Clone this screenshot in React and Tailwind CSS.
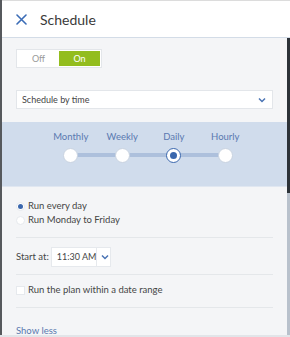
import React, { useState } from "react";

const Chevron = ({ className }) => (
  <svg width="8" height="6" viewBox="0 0 8 6" className={className}>
    <polyline points="1,1.5 4,4.5 7,1.5" fill="none" stroke="#4a74b4" strokeWidth="1.5" />
  </svg>
);

export default function App() {
  const [enabled, setEnabled] = useState(true);
  const [freq, setFreq] = useState("Daily");
  const [runMode, setRunMode] = useState("every");
  const steps = ["Monthly", "Weekly", "Daily", "Hourly"];

  return (
    <div
      className="relative flex w-[290px] h-[337px] overflow-hidden bg-white text-[#404040]"
      style={{ fontFamily: "Lato, 'Open Sans', sans-serif" }}
    >
      {/* window edge */}
      <div className="w-[2px] shrink-0 bg-[#56595d]" />

      <div className="flex flex-1 flex-col">
        {/* header */}
        <div className="flex h-[38px] shrink-0 items-center border-t border-b border-t-[#dcdcdc] border-b-[#d3dce7] bg-white pl-[14px]">
          <svg width="11" height="11" viewBox="0 0 11 11">
            <path d="M1 1 L10 10 M10 1 L1 10" stroke="#3b6cb6" strokeWidth="1.6" strokeLinecap="round" />
          </svg>
          <span className="ml-[13px] text-[14px] text-[#3a3a3a]">Schedule</span>
        </div>

        <div className="flex flex-1">
          {/* body */}
          <div className="flex flex-1 flex-col bg-[#f4f5f7]">
            <div className="px-[14px] pt-[11px]">
              <div className="flex h-[19px] w-[86px] border border-[#e3e6ea] bg-white p-[1px] text-[9px]">
                <button
                  onClick={() => setEnabled(false)}
                  className={`flex-1 ${!enabled ? "bg-[#93bd1e] text-white" : "text-[#9a9a9a]"}`}
                >
                  Off
                </button>
                <button
                  onClick={() => setEnabled(true)}
                  className={`flex-1 ${enabled ? "bg-[#93bd1e] text-white" : "text-[#9a9a9a]"}`}
                >
                  On
                </button>
              </div>

              <div className="mt-[22px] flex h-[19px] items-center justify-between border border-[#e3e6ea] bg-white pl-[5px] pr-[6px] text-[9px] text-[#454545]">
                <span>Schedule by time</span>
                <Chevron />
              </div>
            </div>

            {/* frequency slider */}
            <div className="mt-[13px] h-[65px] border-b border-[#e0e7f1] bg-[#d0dcec] pt-[9px]">
              <div className="relative ml-[43px] flex w-[206px]">
                <div className="absolute left-[25px] right-[25px] top-[22px] h-[4px] bg-[#adc0dc]" />
                {steps.map((s) => (
                  <button
                    key={s}
                    onClick={() => setFreq(s)}
                    className="relative flex flex-1 flex-col items-center gap-[5px]"
                  >
                    <span className="h-[12px] text-[9.5px] leading-[12px] text-[#5a79b0]">{s}</span>
                    <span
                      className={`flex h-[15px] w-[15px] items-center justify-center rounded-full bg-white ${
                        freq === s ? "border-[1.5px] border-[#3a67ad]" : "border border-[#c9d3e0]"
                      }`}
                    >
                      {freq === s && <span className="h-[7px] w-[7px] rounded-full bg-[#3a67ad]" />}
                    </span>
                  </button>
                ))}
              </div>
            </div>

            <div className="px-[14px] pt-[12px] text-[9.5px]">
              {[
                ["every", "Run every day"],
                ["weekdays", "Run Monday to Friday"],
              ].map(([key, label]) => (
                <button
                  key={key}
                  onClick={() => setRunMode(key)}
                  className="flex h-[14px] items-center gap-[3px] text-[#454545]"
                >
                  <span className="flex h-[9px] w-[9px] items-center justify-center rounded-full border border-[#e6e9ed] bg-white">
                    {runMode === key && <span className="h-[5px] w-[5px] rounded-full bg-[#3a67ad]" />}
                  </span>
                  {label}
                </button>
              ))}

              <div className="mt-[10px] border-t border-[#e4e7ea]" />

              <div className="mt-[9px] flex items-center gap-[2px]">
                <span className="whitespace-nowrap text-[#454545]">Start at:</span>
                <div className="flex h-[20px] w-[60px] items-center border border-[#e6e9ed] bg-white">
                  <span className="flex-1 whitespace-nowrap pl-[5px] text-[9px] text-[#454545]">11:30 AM</span>
                  <span className="flex h-full w-[16px] shrink-0 items-center justify-center border-l border-[#e6e9ed]">
                    <Chevron />
                  </span>
                </div>
              </div>

              <div className="mt-[7px] border-t border-[#e4e7ea]" />

              <div className="mt-[8px] flex h-[14px] items-center gap-[3px] text-[#454545]">
                <span className="h-[9px] w-[9px] border border-[#e6e9ed] bg-white" />
                Run the plan within a date range
              </div>

              <div className="mt-[10px] border-t border-[#e4e7ea]" />

              <div className="mt-[17px] text-[9.5px] leading-[12px] text-[#5a79b0]">Show less</div>
            </div>
          </div>

          {/* scrollbar */}
          <div className="flex w-[3px] shrink-0 flex-col bg-[#b8c1cc]">
            <div className="h-[155px] bg-[#2c3238]" />
          </div>
        </div>
      </div>

      {/* watermark + bottom edge */}
      <div className="absolute left-[128px] top-[331px] text-[12px] text-[#d6dadf]">Activate Windows</div>
      <div className="absolute bottom-0 left-0 right-0 h-[2px] bg-[#e2e5e9]" />
    </div>
  );
}
